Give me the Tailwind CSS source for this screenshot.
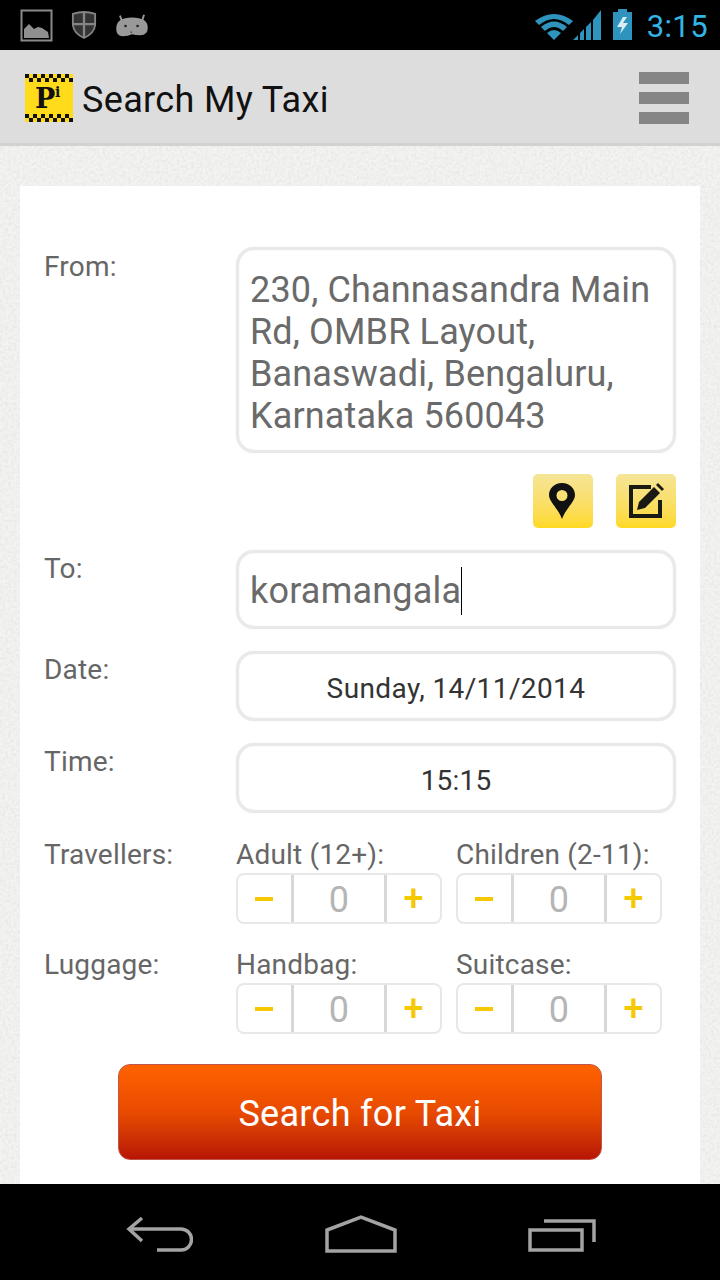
<!DOCTYPE html>
<html lang="en">
<head>
<meta charset="utf-8">
<script src="https://cdn.jsdelivr.net/npm/@tailwindcss/browser@4"></script>
<title>Search My Taxi</title>
</head>
<body class="w-[720px] h-[1280px] overflow-hidden bg-[#f3f3f2] font-['Roboto',sans-serif] flex flex-col relative">
    <!-- paper texture behind the form -->
    <svg class="absolute inset-0 -z-10" width="720" height="1280">
        <filter id="paper"><feTurbulence type="fractalNoise" baseFrequency="0.35" numOctaves="2" seed="4"/><feColorMatrix values="0 0 0 0 0.55  0 0 0 0 0.55  0 0 0 0 0.55  0.5 0 0 0 -0.18"/></filter>
        <rect width="720" height="1280" filter="url(#paper)"/>
    </svg>

    <!-- status bar -->
    <div class="h-[50px] bg-black flex items-center pl-[20px] pr-[12px] shrink-0">
        <svg width="33" height="33" viewBox="0 0 33 33" class="mr-[18px]">
            <rect x="1.5" y="1.5" width="30" height="30" fill="none" stroke="#8a8a8a" stroke-width="2"/>
            <path d="M4 29V20L9 15L14 20L18 18L22 19L28 23L29 29Z" fill="#8f8f8f"/>
        </svg>
        <svg width="26" height="28" viewBox="0 0 28 30" class="mr-[18px]">
            <path d="M2 3Q14 -1 26 3V15Q25 24 14 29Q3 24 2 15Z" fill="#333" stroke="#858585" stroke-width="2"/>
            <path d="M14 2V28M2 14H26" stroke="#858585" stroke-width="2.500"/>
        </svg>
        <svg width="34" height="26" viewBox="0 0 36 28">
            <path d="M5 4L7 9M31 3L29 9" stroke="#999" stroke-width="2"/>
            <path d="M1 18Q1 6 18 6Q35 6 35 17Q35 25 27 25Q21 25 18 24Q14 26 8 26Q1 26 1 18Z" fill="#999"/>
            <circle cx="11" cy="15" r="1.400" fill="#222"/><circle cx="24" cy="15" r="1.400" fill="#222"/>
            <rect x="16.500" y="21" width="1.400" height="1.400" fill="#333"/>
        </svg>
        <div class="ml-auto flex items-center">
            <svg width="40" height="30" viewBox="0 0 40 30" class="mr-[-2px]">
                <path d="M1 11Q20 -3 39 11L35 15Q20 3 5 15Z" fill="#2e93bd"/>
                <path d="M7 17Q20 6 33 17L29 21Q20 13 11 21Z" fill="#2e93bd"/>
                <path d="M13 23Q20 17 27 23L20 30Z" fill="#2e93bd"/>
            </svg>
            <svg width="30" height="32" viewBox="0 0 30 32">
                <path d="M1 31L6 26V31Z M8 24L12 20V31H8Z M14 18L19 13V31H14Z M21 11L29 1V31H21Z" fill="#2e93bd"/>
            </svg>
            <svg width="21" height="32" viewBox="0 0 21 32" class="ml-[10px]">
                <path d="M6 0H15V3H20V31H1V3H6Z" fill="#2e93bd"/>
                <path d="M11 8L5 18H10L8 25L16 14H11L15 8Z" fill="#d8edf5"/>
            </svg>
            <span class="ml-[14px] text-[#33b5e5] text-[31px] leading-none tracking-[0.4px] pt-[2px]">3:15</span>
        </div>
    </div>

    <!-- action bar -->
    <div class="h-[96px] bg-[#dddddd] border-b-[3px] border-[#d2d2d2] flex items-center pl-[25px] pr-[31px] pt-[2px] shrink-0">
        <svg width="48" height="48" viewBox="0 0 48 48" class="shrink-0">
            <rect width="48" height="48" fill="#ffdb1c"/>
            <path fill="#111" d="M0 0H4V4H0Z M8 0H12V4H8Z M16 0H20V4H16Z M24 0H28V4H24Z M32 0H36V4H32Z M40 0H44V4H40Z M4 4H8V8H4Z M12 4H16V8H12Z M20 4H24V8H20Z M28 4H32V8H28Z M36 4H40V8H36Z M44 4H48V8H44Z M0 40H4V44H0Z M8 40H12V44H8Z M16 40H20V44H16Z M24 40H28V44H24Z M32 40H36V44H32Z M40 40H44V44H40Z M4 44H8V48H4Z M12 44H16V48H12Z M20 44H24V48H20Z M28 44H32V48H28Z M36 44H40V48H36Z M44 44H48V48H44Z"/>
            <text x="10" y="34" font-family="DejaVu Serif" font-weight="900" font-size="27" fill="#111">P</text>
            <text x="30" y="23" font-family="DejaVu Serif" font-weight="700" font-size="14" fill="#111">i</text>
        </svg>
        <h1 class="ml-[9px] text-[36px] leading-none tracking-[0.35px] text-[#111] font-normal pt-[4px]">Search My Taxi</h1>
        <div class="ml-auto flex flex-col gap-[8px]">
            <div class="w-[50px] h-[12px] bg-[#858585]"></div>
            <div class="w-[50px] h-[12px] bg-[#858585]"></div>
            <div class="w-[50px] h-[12px] bg-[#858585]"></div>
        </div>
    </div>

    <!-- form card -->
    <div class="flex-1 min-h-0 pt-[40px] px-[20px]">
        <div class="h-full bg-white pt-[62px] pl-[24px] pr-[24px] text-[#666] text-[28px] tracking-[0.2px]">
            <div class="flex">
                <span class="w-[192px] leading-[38px]">From:</span>
                <div class="w-[440px] h-[206px] mt-[-1px] border-[3px] border-[#e9e9e9] rounded-[18px] shadow-[0_0_1px_#d8d8d8,inset_0_0_1px_#d8d8d8] pl-[11px] pt-[19px] text-[36px] leading-[42px] tracking-[0.15px] text-[#6a6a6a]">230, Channasandra Main Rd, OMBR Layout, Banaswadi, Bengaluru, Karnataka 560043</div>
            </div>
            <div class="flex justify-end gap-[23px] mt-[21px]">
                <div class="w-[60px] h-[54px] rounded-[5px] bg-gradient-to-b from-[#f5e596] to-[#ffd91f] flex items-center justify-center">
                    <svg width="28" height="38" viewBox="0 0 28 38" class="mr-[3px]">
                        <path fill-rule="evenodd" fill="#111" d="M14 1C6 1 1 7 1 13C1 20 10 26 14 37C18 26 27 20 27 13C27 7 22 1 14 1ZM14 8A5.500 5.500 0 1 1 14 19A5.500 5.500 0 1 1 14 8Z"/>
                    </svg>
                </div>
                <div class="w-[60px] h-[54px] rounded-[5px] bg-gradient-to-b from-[#f5e596] to-[#ffd91f] flex items-center justify-center">
                    <svg width="38" height="38" viewBox="0 0 38 38">
                        <path d="M24 5H4V34H33V18" fill="none" stroke="#1a1a14" stroke-width="4"/>
                        <path d="M10 28L12 20L27 5L33 11L18 26Z" fill="#1a1a14"/>
                        <path d="M29 3L31 1L37 7L35 9Z" fill="#1a1a14"/>
                    </svg>
                </div>
            </div>
            <div class="flex mt-[22px]">
                <span class="w-[192px] leading-[38px]">To:</span>
                <div class="w-[440px] h-[79px] border-[3px] border-[#e9e9e9] rounded-[18px] shadow-[0_0_1px_#d8d8d8,inset_0_0_1px_#d8d8d8] pl-[11px] pt-[2px] flex items-center text-[36px] tracking-[0.2px] text-[#6a6a6a]">koramangala<span class="w-[1px] h-[48px] bg-black"></span></div>
            </div>
            <div class="flex mt-[22px]">
                <span class="w-[192px] leading-[38px]">Date:</span>
                <div class="w-[440px] h-[70px] border-[3px] border-[#e9e9e9] rounded-[18px] shadow-[0_0_1px_#d8d8d8,inset_0_0_1px_#d8d8d8] pt-[6px] flex items-center justify-center text-[#333] tracking-[0.4px]">Sunday, 14/11/2014</div>
            </div>
            <div class="flex mt-[22px]">
                <span class="w-[192px] leading-[38px]">Time:</span>
                <div class="w-[440px] h-[70px] border-[3px] border-[#e9e9e9] rounded-[18px] shadow-[0_0_1px_#d8d8d8,inset_0_0_1px_#d8d8d8] pt-[6px] flex items-center justify-center text-[#333] tracking-[0.2px]">15:15</div>
            </div>
            <div class="flex mt-[23px]">
                <span class="w-[192px] leading-[38px]">Travellers:</span>
                <div class="w-[206px] mr-[14px]">
                    <div class="h-[38px] leading-[38px] whitespace-nowrap">Adult (12+):</div>
                    <div class="flex h-[51px] border-2 border-[#e8e8e8] rounded-[8px] mt-[-1px] text-[36px] leading-none">
                        <div class="w-[56px] pr-[2px] border-r-[3px] border-[#d8d8d8] flex items-center justify-center"><div class="w-[18px] h-[4px] bg-[#f5c800]"></div></div>
                        <div class="w-[93px] pt-[2px] border-r-[3px] border-[#d8d8d8] flex items-center justify-center text-[#b5b5b5]">0</div>
                        <div class="flex-1 flex items-center justify-center text-[#f5c800] font-medium">+</div>
                    </div>
                </div>
                <div class="w-[206px]">
                    <div class="h-[38px] leading-[38px] whitespace-nowrap">Children (2-11):</div>
                    <div class="flex h-[51px] border-2 border-[#e8e8e8] rounded-[8px] mt-[-1px] text-[36px] leading-none">
                        <div class="w-[56px] pr-[2px] border-r-[3px] border-[#d8d8d8] flex items-center justify-center"><div class="w-[18px] h-[4px] bg-[#f5c800]"></div></div>
                        <div class="w-[93px] pt-[2px] border-r-[3px] border-[#d8d8d8] flex items-center justify-center text-[#b5b5b5]">0</div>
                        <div class="flex-1 flex items-center justify-center text-[#f5c800] font-medium">+</div>
                    </div>
                </div>
            </div>
            <div class="flex mt-[22px]">
                <span class="w-[192px] leading-[38px]">Luggage:</span>
                <div class="w-[206px] mr-[14px]">
                    <div class="h-[38px] leading-[38px]">Handbag:</div>
                    <div class="flex h-[51px] border-2 border-[#e8e8e8] rounded-[8px] mt-[-1px] text-[36px] leading-none">
                        <div class="w-[56px] pr-[2px] border-r-[3px] border-[#d8d8d8] flex items-center justify-center"><div class="w-[18px] h-[4px] bg-[#f5c800]"></div></div>
                        <div class="w-[93px] pt-[2px] border-r-[3px] border-[#d8d8d8] flex items-center justify-center text-[#b5b5b5]">0</div>
                        <div class="flex-1 flex items-center justify-center text-[#f5c800] font-medium">+</div>
                    </div>
                </div>
                <div class="w-[206px]">
                    <div class="h-[38px] leading-[38px]">Suitcase:</div>
                    <div class="flex h-[51px] border-2 border-[#e8e8e8] rounded-[8px] mt-[-1px] text-[36px] leading-none">
                        <div class="w-[56px] pr-[2px] border-r-[3px] border-[#d8d8d8] flex items-center justify-center"><div class="w-[18px] h-[4px] bg-[#f5c800]"></div></div>
                        <div class="w-[93px] pt-[2px] border-r-[3px] border-[#d8d8d8] flex items-center justify-center text-[#b5b5b5]">0</div>
                        <div class="flex-1 flex items-center justify-center text-[#f5c800] font-medium">+</div>
                    </div>
                </div>
            </div>
            <button class="block ml-[74px] mt-[30px] w-[484px] h-[96px] pt-[3px] rounded-[12px] border border-[#c0564a] bg-gradient-to-b from-[#ff6200] via-[#e84b00] to-[#b81405] text-white text-[36px] tracking-[0.3px]">Search for Taxi</button>
        </div>
    </div>

    <!-- nav bar -->
    <div class="h-[96px] bg-black shrink-0 flex items-center justify-between pl-[125px] pr-[124px] pt-[4px]">
        <svg width="68" height="38" viewBox="0 0 68 38" fill="none" stroke="#a3a3a3" stroke-width="3.500">
            <path d="M17 3L4 14L17 26M4 14H56A10.500 10.500 0 0 1 56 35H32" stroke-width="3.500"/>
        </svg>
        <svg width="72" height="38" viewBox="0 0 72 38" fill="none" stroke="#a3a3a3" stroke-width="3.500">
            <path d="M2 36V15L36 2L70 15V36Z"/>
        </svg>
        <svg width="68" height="38" viewBox="0 0 68 38" fill="none" stroke="#a3a3a3" stroke-width="3.500">
            <path d="M2 15H54V35H2Z M16 6H66V27"/>
        </svg>
    </div>
</body>
</html>
